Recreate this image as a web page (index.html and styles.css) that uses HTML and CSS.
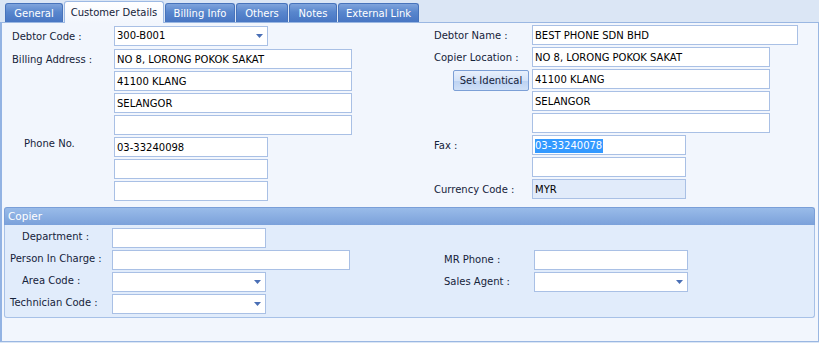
FILE: index.html
```html
<!DOCTYPE html>
<html>
<head>
<meta charset="utf-8">
<link rel="stylesheet" href="styles.css">
</head>
<body>
<div class="tabs">
  <div class="tab t1">General</div>
  <div class="tab t2 active">Customer Details</div>
  <div class="tab t3">Billing Info</div>
  <div class="tab t4">Others</div>
  <div class="tab t5">Notes</div>
  <div class="tab t6">External Link</div>
</div>
<div class="panel">
  <div class="main">
    <div class="col left">
      <div class="row first">
        <div class="lbl">Debtor Code :</div>
        <div class="fields">
          <div class="box combo w154"><span>300-B001</span><svg width="7" height="4" viewBox="0 0 7 4"><polygon points="0,0 7,0 3.5,4" fill="#4a6fb5"/></svg></div>
        </div>
      </div>
      <div class="row">
        <div class="lbl">Billing Address :</div>
        <div class="fields">
          <div class="box w238">NO 8, LORONG POKOK SAKAT</div>
          <div class="box w238">41100 KLANG</div>
          <div class="box w238">SELANGOR</div>
          <div class="box w238"></div>
        </div>
      </div>
      <div class="row">
        <div class="lbl phone">Phone No.</div>
        <div class="fields">
          <div class="box w154">03-33240098</div>
          <div class="box w154"></div>
          <div class="box w154"></div>
        </div>
      </div>
    </div>
    <div class="col right">
      <div class="row">
        <div class="lbl">Debtor Name :</div>
        <div class="fields">
          <div class="box w266">BEST PHONE SDN BHD</div>
        </div>
      </div>
      <div class="row">
        <div class="lbl stack">
          <div>Copier Location :</div>
          <button class="btn">Set Identical</button>
        </div>
        <div class="fields">
          <div class="box w238">NO 8, LORONG POKOK SAKAT</div>
          <div class="box w238">41100 KLANG</div>
          <div class="box w238">SELANGOR</div>
          <div class="box w238"></div>
        </div>
      </div>
      <div class="row">
        <div class="lbl">Fax :</div>
        <div class="fields">
          <div class="box w154"><span class="sel">03-33240078</span></div>
          <div class="box w154"></div>
        </div>
      </div>
      <div class="row">
        <div class="lbl">Currency Code :</div>
        <div class="fields">
          <div class="box w154 ro">MYR</div>
        </div>
      </div>
    </div>
  </div>
  <div class="group">
    <div class="ghead">Copier</div>
    <div class="gbody">
      <div class="glbl ind">Department :</div>
      <div class="box w154"></div>
      <div class="glbl">Person In Charge :</div>
      <div class="box w238"></div>
      <div class="rlbl">MR Phone :</div>
      <div class="box w154"></div>
      <div class="glbl ind">Area Code :</div>
      <div class="box combo w154"><span></span><svg width="7" height="4" viewBox="0 0 7 4"><polygon points="0,0 7,0 3.5,4" fill="#4a6fb5"/></svg></div>
      <div class="rlbl">Sales Agent :</div>
      <div class="box combo w154"><span></span><svg width="7" height="4" viewBox="0 0 7 4"><polygon points="0,0 7,0 3.5,4" fill="#4a6fb5"/></svg></div>
      <div class="glbl">Technician Code :</div>
      <div class="box combo w154"><span></span><svg width="7" height="4" viewBox="0 0 7 4"><polygon points="0,0 7,0 3.5,4" fill="#4a6fb5"/></svg></div>
    </div>
  </div>
</div>
</body>
</html>
```
FILE: styles.css
```css
* { box-sizing: border-box; }
html, body { margin: 0; padding: 0; }
body {
  width: 819px;
  height: 343px;
  overflow: hidden;
  background: #dbe6f5;
  font-family: "DejaVu Sans", "Liberation Sans", sans-serif;
  font-size: 10px;
  color: #15233a;
}
.tabs {
  display: flex;
  align-items: flex-end;
  height: 22px;
  padding-left: 5px;
  gap: 1px;
}
.tab {
  height: 19px;
  padding-top: 1px;
  border: 1px solid #4773bb;
  border-bottom: none;
  border-radius: 3px 3px 0 0;
  background: linear-gradient(#7fa4dc, #5886cd 45%, #4876c3);
  color: #fff;
  display: flex;
  align-items: center;
  justify-content: center;
  white-space: nowrap;
}
.tab.active {
  height: 22px;
  margin-bottom: -1px;
  background: linear-gradient(#ffffff, #f2f6fd);
  color: #15233a;
  border-color: #9cb9e4;
  position: relative;
  z-index: 1;
  padding-top: 0;
  padding-bottom: 1px;
}
.t1 { width: 58px; }
.t2 { width: 100px; }
.t3 { width: 70px; }
.t4 { width: 52px; }
.t5 { width: 48px; }
.t6 { width: 81px; }
.panel {
  height: 320px;
  background: #f2f6fd;
  border: 1px solid #9ab7e2;
  border-left: 2px solid #93b3e3;
}
.main {
  display: flex;
  align-items: flex-start;
}
.col { display: flex; flex-direction: column; gap: 2px; }
.left { width: 420px; padding: 3px 0 0 10px; }
.left .first { margin-bottom: 1px; }
.left .lbl { width: 102px; }
.right { padding: 2px 0 0 12px; }
.right .lbl { width: 98px; }
.row { display: flex; align-items: flex-start; }
.lbl { flex: none; line-height: 18px; padding-top: 2px; white-space: nowrap; }
.lbl.phone { padding-left: 12px; padding-top: 0; line-height: 14px; }
.lbl.stack { display: flex; flex-direction: column; }
.fields { display: flex; flex-direction: column; gap: 2px; }
.box {
  height: 20px;
  border: 1px solid #a9c0e5;
  background: #fff;
  padding: 1px 2px 0;
  line-height: 18px;
  color: #000;
  white-space: nowrap;
}
.box.ro { background: #e1ebfa; }
.combo {
  display: flex;
  align-items: center;
  justify-content: space-between;
  padding: 0 4px 0 2px;
}
.w154 { width: 154px; }
.w238 { width: 238px; }
.w266 { width: 266px; }
.sel { background: #3399ff; color: #fff; display: inline-block; line-height: 14px; padding-right: 1px; }
.btn {
  margin: 3px 0 0 19px;
  width: 76px;
  height: 21px;
  padding: 0;
  border: 1px solid #7c9fd6;
  border-radius: 2px;
  background: linear-gradient(#e8f0fc, #d3e2f8 50%, #bcd2f2 51%, #cfe0f7);
  font: inherit;
  color: #15233a;
}
.group { margin: 6px 3px 0 2px; }
.ghead {
  height: 18px;
  line-height: 17px;
  padding-left: 3px;
  color: #fff;
  font-size: 10.5px;
  background: linear-gradient(#99bbe9, #7ba1da);
  border: 1px solid #7a9fd8;
  border-bottom: none;
  border-radius: 3px 3px 0 0;
}
.gbody {
  background: #e1ecfb;
  border: 1px solid #a7c1e7;
  border-top: none;
  border-radius: 0 0 3px 3px;
  padding: 3px 0;
  display: grid;
  grid-template-columns: 107px 332px 90px 154px;
  grid-auto-rows: 20px;
  row-gap: 2px;
}
.glbl { grid-column: 1; padding-left: 5px; line-height: 18px; white-space: nowrap; }
.glbl.ind { padding-left: 17px; }
.rlbl { line-height: 20px; white-space: nowrap; }
```
